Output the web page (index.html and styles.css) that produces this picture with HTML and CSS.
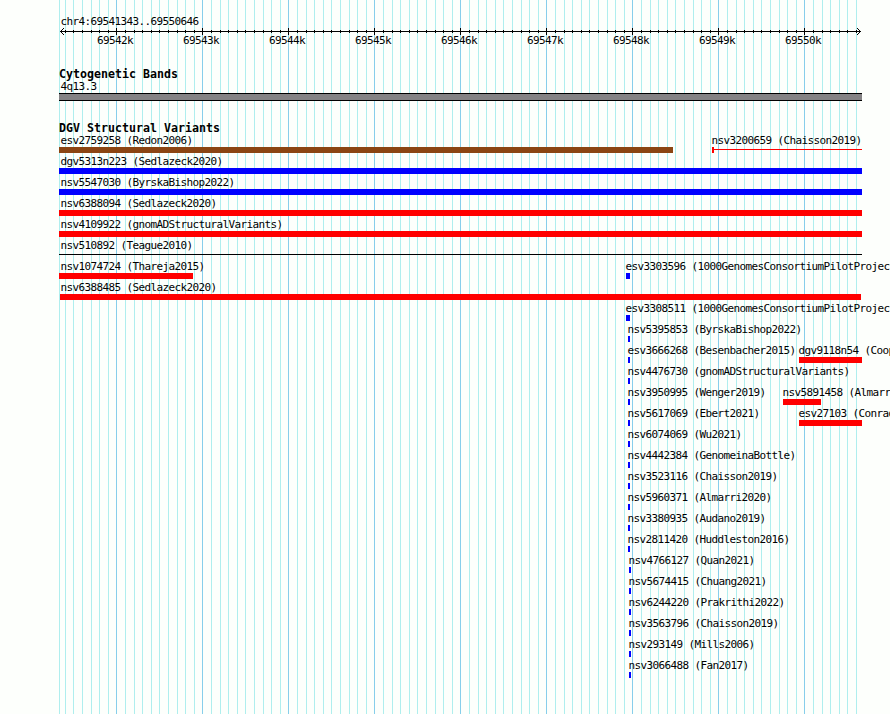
FILE: index.html
```
<!DOCTYPE html>
<html lang="en">
<head>
  <meta charset="UTF-8">
  <title>chr4:69541343..69550646</title>
  <link rel="stylesheet" href="styles.css">
</head>
<body>

<div class="browser">
  <svg class="grid" width="890" height="714" shape-rendering="crispEdges">
    <path id="minorLines" class="minor"></path>
    <path id="majorLines" class="major"></path>
  </svg>

  <div class="tracks">
    <header class="ruler">
      <div class="region">chr4:69541343..69550646</div>
      <svg class="axis" width="803" height="7" viewBox="0 0 803 7" shape-rendering="crispEdges">
        <path id="axisPath" fill="none" stroke="#000" stroke-width="1"></path>
      </svg>
      <div class="scale">
        <span>69542k</span><span>69543k</span><span>69544k</span><span>69545k</span><span>69546k</span><span>69547k</span><span>69548k</span><span>69549k</span><span>69550k</span>
      </div>
    </header>

    <section class="cyto">
      <h2>Cytogenetic Bands</h2>
      <div class="band-name">4q13.3</div>
      <div class="band"></div>
    </section>

    <section class="variants">
      <h2>DGV Structural Variants</h2>
      <div id="rows"></div>
    </section>
  </div>
</div>

<script src="script.js"></script>
</body>
</html>
```
FILE: styles.css
```
body { margin:0; background:#fdfffc; color:#000; font:11px/12px "DejaVu Sans Mono", monospace; letter-spacing:-0.62px; overflow:hidden; }
h2 { margin:0; font-size:11.6px; line-height:13px; font-weight:bold; letter-spacing:0.02px; white-space:nowrap; }

.browser { display:grid; width:890px; height:714px; overflow:hidden; }
.grid, .tracks { grid-area:1 / 1; min-width:0; }
.tracks { padding:16px 0 0 59px; }
.minor { fill:none; stroke:#afeeee; }
.major { fill:none; stroke:#87ceeb; }

.ruler { height:52px; }
.region { height:12px; padding-left:1.4px; }
.axis { display:block; }
.scale { display:flex; padding-left:13px; }
.scale span { width:86px; text-align:center; }

.cyto { height:54px; }
.band-name { height:12px; padding-left:1.4px; }
.band { width:803px; height:8px; box-sizing:border-box; border:solid #000; border-width:1px 0; background:#848284; }

.row { display:grid; height:21px; }
.feature { grid-area:1 / 1; width:0; }
.name { height:12px; padding-left:0.4px; white-space:nowrap; }
.bar { height:6px; }
.line { height:1px; margin-top:2px; }
.red { background:#f00; }
.blue { background:#00f; }
.brown { background:#8b4513; }
.black { background:#000; }
.insertion { display:flex; }
.insertion .bar { width:2px; }
.insertion .line { flex:1; }
```
FILE: script.js
```
const LEFT = 59;

// name, colour, start, end, shape
const rows = [
  [['esv2759258 (Redon2006)', 'brown', 59, 673], ['nsv3200659 (Chaisson2019)', 'red', 712, 862, 'insertion']],
  [['dgv5313n223 (Sedlazeck2020)', 'blue', 59, 862]],
  [['nsv5547030 (ByrskaBishop2022)', 'blue', 59, 862]],
  [['nsv6388094 (Sedlazeck2020)', 'red', 59, 862]],
  [['nsv4109922 (gnomADStructuralVariants)', 'red', 59, 862]],
  [['nsv510892 (Teague2010)', 'black', 59, 862, 'line']],
  [['nsv1074724 (Thareja2015)', 'red', 59, 193], ['esv3303596 (1000GenomesConsortiumPilotProject)', 'blue', 626, 630]],
  [['nsv6388485 (Sedlazeck2020)', 'red', 60, 861]],
  [['esv3308511 (1000GenomesConsortiumPilotProject)', 'blue', 626, 630]],
  [['nsv5395853 (ByrskaBishop2022)', 'blue', 628, 630]],
  [['esv3666268 (Besenbacher2015)', 'blue', 628, 630], ['dgv9118n54 (Cooper2008)', 'red', 799, 862]],
  [['nsv4476730 (gnomADStructuralVariants)', 'blue', 628, 630]],
  [['nsv3950995 (Wenger2019)', 'blue', 628, 630], ['nsv5891458 (Almarri2020)', 'red', 783, 821]],
  [['nsv5617069 (Ebert2021)', 'blue', 628, 630], ['esv27103 (Conrad2009)', 'red', 799, 862]],
  [['nsv6074069 (Wu2021)', 'blue', 628, 630]],
  [['nsv4442384 (GenomeinaBottle)', 'blue', 628, 630]],
  [['nsv3523116 (Chaisson2019)', 'blue', 628, 630]],
  [['nsv5960371 (Almarri2020)', 'blue', 628, 630]],
  [['nsv3380935 (Audano2019)', 'blue', 628, 630]],
  [['nsv2811420 (Huddleston2016)', 'blue', 628, 630]],
  [['nsv4766127 (Quan2021)', 'blue', 629, 631]],
  [['nsv5674415 (Chuang2021)', 'blue', 629, 631]],
  [['nsv6244220 (Prakrithi2022)', 'blue', 629, 631]],
  [['nsv3563796 (Chaisson2019)', 'blue', 629, 631]],
  [['nsv293149 (Mills2006)', 'blue', 629, 631]],
  [['nsv3066488 (Fan2017)', 'blue', 629, 631]]
];

function shape(colour, width, kind) {
  if (kind === 'insertion') {
    return `<div class="insertion" style="width:${width}px"><div class="bar ${colour}"></div><div class="line ${colour}"></div></div>`;
  }
  return `<div class="${kind || 'bar'} ${colour}" style="width:${width}px"></div>`;
}

// names start one pixel before the feature, but never left of x = 60
document.getElementById('rows').innerHTML = rows.map(row => `
  <div class="row">${row.map(([name, colour, start, end, kind]) => `
    <div class="feature" style="margin-left:${start - LEFT}px">
      <div class="name" style="margin-left:${Math.max(60, start - 1) - start}px">${name}</div>
      ${shape(colour, end - start, kind)}
    </div>`).join('')}
  </div>`).join('');

// grid line and ruler tick every 100 bp, stronger every 1 kb
const steps = [0, 9, 18, 26, 35, 43, 52, 61, 69, 78];
let minor = 'M59.5 0V714', major = '';
let axis = 'M1 3.5H802M4.5 0V1M3.5 1V2M2.5 2V3M2.5 4V5M3.5 5V6M4.5 6V7M798.5 0V1M799.5 1V2M800.5 2V3M800.5 4V5M799.5 5V6M798.5 6V7';
for (let kb = 30; kb < 862; kb += 86) {
  steps.forEach((s, i) => {
    const x = kb + s + 0.5;
    if (x < 60 || x > 862) return;
    if (i) minor += `M${x} 0V714`; else major += `M${x} 0V714`;
    axis += i ? `M${x - LEFT} 2V5` : `M${x - LEFT} 0V7`;
  });
}
document.getElementById('minorLines').setAttribute('d', minor);
document.getElementById('majorLines').setAttribute('d', major);
document.getElementById('axisPath').setAttribute('d', axis);
```
